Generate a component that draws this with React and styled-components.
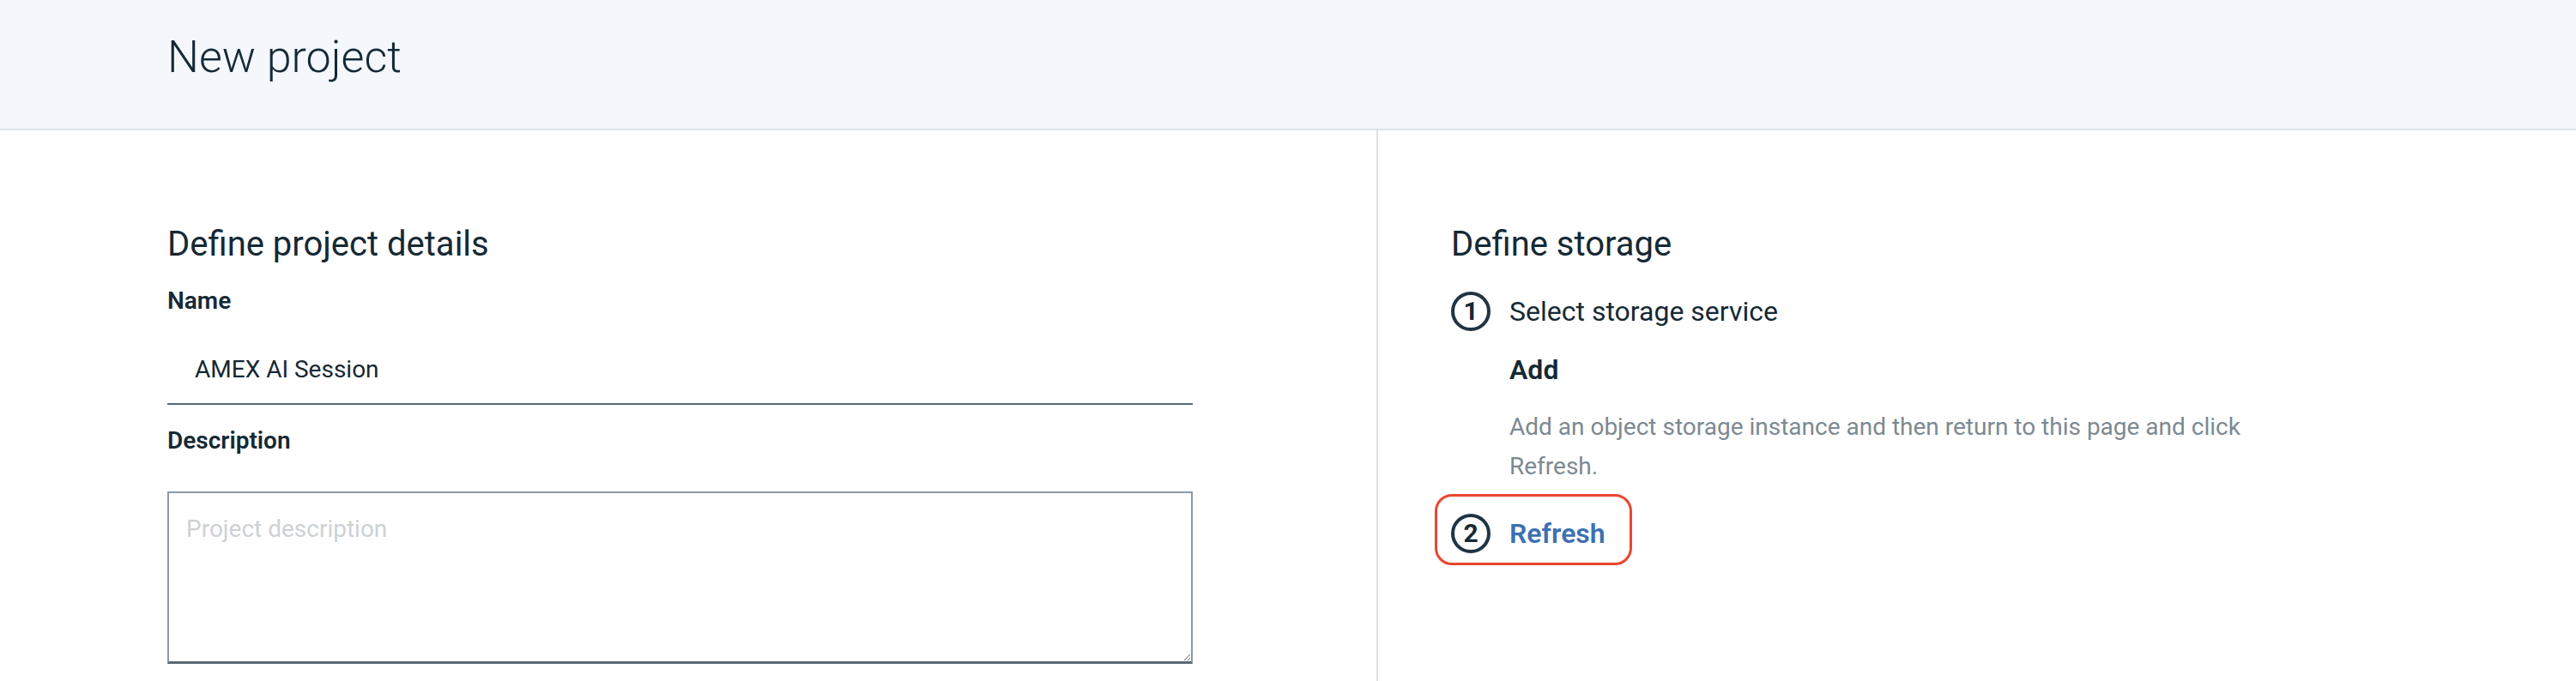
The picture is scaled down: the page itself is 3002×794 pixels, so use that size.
import React from 'react'
import styled, { createGlobalStyle } from 'styled-components'

const GlobalStyle = createGlobalStyle`
  body {
    margin: 0;
    background: #ffffff;
    font-family: Roboto, "Liberation Sans", Arial, sans-serif;
    color: #152935;
  }
`;

const Page = styled.div`
  display: flex;
  flex-direction: column;
  min-height: 794px;
`;

const Header = styled.header`
  height: 152px;
  background-color: #f4f7fb;
  border-bottom: 2px solid #dfe3e6;
  padding: 41px 0 0 195px;
  box-sizing: border-box;
`;

const PageTitle = styled.h1`
  margin: 0;
  font-size: 52px;
  line-height: 1;
  font-weight: 300;
  color: #152935;
`;

const Main = styled.main`
  flex: 1;
  display: grid;
  grid-template-columns: 1604px 1fr;
`;

const Column = styled.section`
  padding-left: ${p => p.$inset}px;
  border-left: ${p => (p.$divided ? '2px solid #e0e0e0' : 'none')};
  padding-bottom: 20px;
`;

const SectionTitle = styled.h2`
  margin: 113px 0 0;
  font-size: 40px;
  line-height: 1;
  font-weight: 400;
  color: #152935;
`;

const Label = styled.label`
  display: block;
  margin-top: ${p => p.$gap}px;
  font-size: 28px;
  line-height: 1;
  font-weight: 600;
  color: #152935;
`;

const TextInput = styled.input`
  display: block;
  width: 1195px;
  height: 82px;
  margin-top: 25px;
  padding: 0 0 0 32px;
  box-sizing: border-box;
  border: none;
  border-bottom: 2px solid #5a6872;
  background: transparent;
  font-family: inherit;
  font-size: 28px;
  color: #152935;
  outline: none;
`;

const TextArea = styled.textarea`
  display: block;
  width: 1195px;
  height: 201px;
  margin-top: 45px;
  padding: 22px 20px;
  box-sizing: border-box;
  border: 2px solid #8c9ba5;
  border-bottom: 3px solid #5a6872;
  font-family: inherit;
  font-size: 28px;
  line-height: 40px;
  color: #152935;
  outline: none;

  &::placeholder {
    color: #cdd1d4;
  }
`;

const Step = styled.div`
  display: flex;
  align-items: center;
  gap: 22px;
  margin-top: 35px;
  font-size: 32px;
  line-height: 46px;
  color: #152935;
`;

const StepNumber = styled.span`
  display: inline-flex;
  align-items: center;
  justify-content: center;
  width: 46px;
  height: 46px;
  box-sizing: border-box;
  border: 4px solid #1f3444;
  border-radius: 50%;
  font-size: 30px;
  font-weight: 700;
  line-height: 1;
  color: #152935;
  flex-shrink: 0;
`;

const StepBody = styled.div`
  margin-left: 68px;
`;

const SubTitle = styled.h3`
  margin: 29px 0 0;
  font-size: 32px;
  line-height: 1;
  font-weight: 600;
  color: #152935;
`;

const Hint = styled.p`
  margin: 28px 0 0;
  max-width: 900px;
  font-size: 28px;
  line-height: 46px;
  color: #7d8992;
`;

const Highlight = styled.div`
  display: inline-flex;
  align-items: center;
  gap: 22px;
  margin: 9px 0 0 -19px;
  padding: 20px 28px 11px 16px;
  border: 3px solid #e8472f;
  border-radius: 20px;
`;

const RefreshLink = styled.a`
  font-size: 32px;
  line-height: 46px;
  font-weight: 600;
  color: #3d70b2;
  text-decoration: none;
  cursor: pointer;
`;

export default function App() {
  return (
    <>
      <GlobalStyle />
      <Page>
        <Header>
          <PageTitle>New project</PageTitle>
        </Header>
        <Main>
          <Column $inset={195}>
            <SectionTitle>Define project details</SectionTitle>
            <Label $gap={32} htmlFor="project-name">Name</Label>
            <TextInput id="project-name" defaultValue="AMEX AI Session" />
            <Label $gap={28} htmlFor="project-description">Description</Label>
            <TextArea id="project-description" placeholder="Project description" />
          </Column>
          <Column $inset={85} $divided>
            <SectionTitle>Define storage</SectionTitle>
            <Step>
              <StepNumber>1</StepNumber>
              <span>Select storage service</span>
            </Step>
            <StepBody>
              <SubTitle>Add</SubTitle>
              <Hint>
                Add an object storage instance and then return to this page and click Refresh.
              </Hint>
            </StepBody>
            <Highlight>
              <StepNumber>2</StepNumber>
              <RefreshLink>Refresh</RefreshLink>
            </Highlight>
          </Column>
        </Main>
      </Page>
    </>
  )
}
